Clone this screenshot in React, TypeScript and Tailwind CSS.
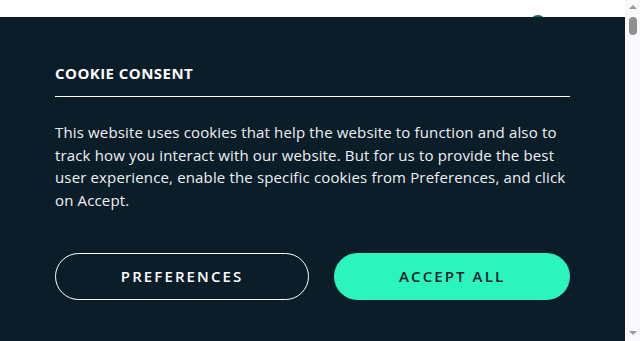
import React from "react";

const FONT = { fontFamily: '"Open Sans", "Noto Sans", sans-serif' };

function Scrollbar() {
  return (
    <div className="flex w-[15px] flex-none flex-col items-center bg-[#f9f9fb]">
      <div className="mt-[5px] h-0 w-0 border-x-[4px] border-b-[4px] border-x-transparent border-b-[#9a9a9a]" />
      <div className="mt-[8px] h-[18px] w-[8px] rounded-full bg-[#8f8f8f]" />
      <div className="flex-1" />
      <div className="mb-[6px] h-0 w-0 border-x-[4px] border-t-[4px] border-x-transparent border-t-[#9a9a9a]" />
    </div>
  );
}

export default function App() {
  return (
    <div className="flex h-[341px] overflow-hidden bg-white" style={FONT}>
      <main className="relative flex min-w-0 flex-1 flex-col">
        {/* page widget peeking out behind the banner */}
        <div className="absolute left-[530px] top-[15px] h-4 w-4 rounded-full bg-[#17685a]" />
        <div className="h-[17px] flex-none" />

        <section className="relative flex-1 bg-[#0c1d2a] px-[55px] pt-[46px]">
          <h2 className="border-b border-white pb-[13px] text-[15px] font-bold uppercase leading-5 tracking-[0.03em] text-white">
            Cookie Consent
          </h2>

          <p className="mt-[24px] text-[15px] leading-[22.5px] tracking-[0.01em] text-[#eef0f2]">
            This website uses cookies that help the website to function and also to track how you
            interact with our website. But for us to provide the best user experience, enable the
            specific cookies from Preferences, and click on Accept.
          </p>

          <div className="mt-[42px] flex gap-[25px]">
            <button className="h-[47px] flex-auto rounded-full border border-white px-10 text-[15px] font-semibold uppercase tracking-[0.14em] text-white">
              Preferences
            </button>
            <button className="h-[47px] flex-auto rounded-full bg-[#2bf4bd] px-10 text-[15px] font-semibold uppercase tracking-[0.14em] text-[#0c1d2a]">
              Accept All
            </button>
          </div>
        </section>
      </main>
      <Scrollbar />
    </div>
  );
}
